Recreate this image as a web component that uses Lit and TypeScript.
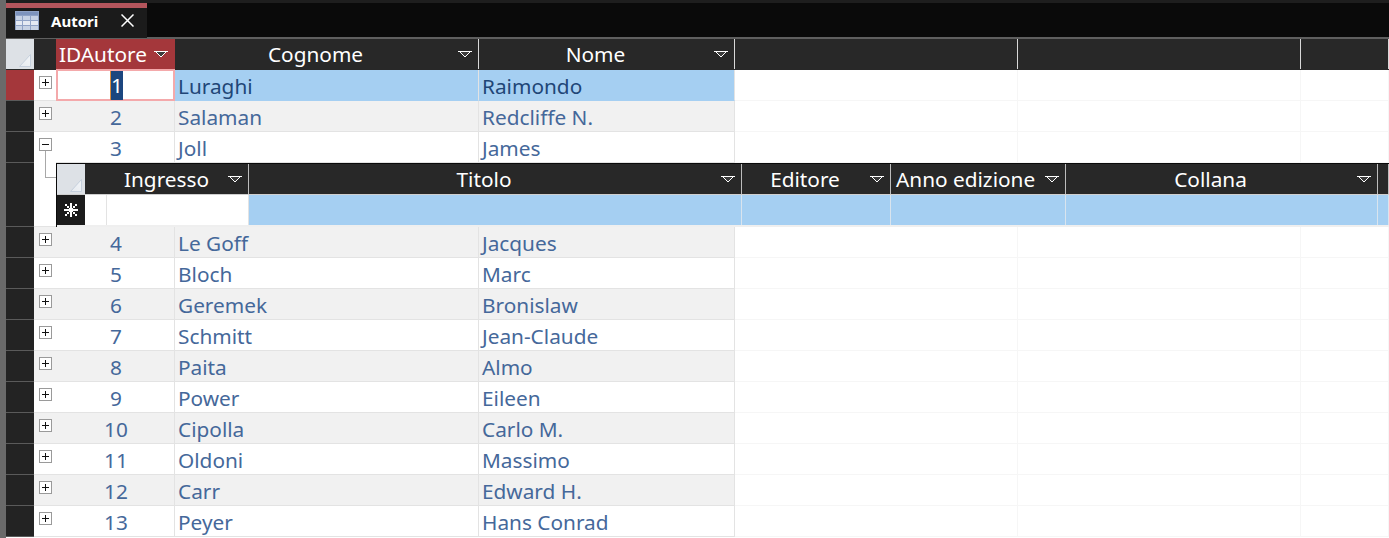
import { LitElement, html, css, svg } from "lit";
import { customElement } from "lit/decorators.js";

const filterIcon = html`<svg class="filter" width="14" height="8" viewBox="0 0 14 8" shape-rendering="crispEdges">
  <path d="M3 1h8v1h-1v1h-1v1h-1v1h-2v-1h-1v-1h-1v-1h-1z" fill="#3c3c3c"/>
  <path d="M0 0h14v1h-14z M2 1h1v1h-1z M11 1h1v1h-1z M3 2h1v1h-1z M10 2h1v1h-1z M4 3h1v1h-1z M9 3h1v1h-1z M5 4h1v1h-1z M8 4h1v1h-1z M6 5h2v1h-2z" fill="#fff"/>
</svg>`;

const cornerIcon = html`<svg class="corner-tri" width="28" height="30" viewBox="0 0 28 30">
  <defs><linearGradient id="cg" x1="0" y1="1" x2="1" y2="0"><stop offset="0" stop-color="#e6eaef"/><stop offset="1" stop-color="#f2f5f8"/></linearGradient></defs>
  <path d="M13.5 27.5 L24.5 15.5 V27.5 Z" fill="url(#cg)" stroke="#c6d0dd" stroke-width="1"/>
</svg>`;

const box = (open: boolean) => html`<svg class="box" width="13" height="13" viewBox="0 0 13 13" shape-rendering="crispEdges">
  <rect x="0.5" y="0.5" width="12" height="12" fill="#fff" stroke="#9a9a9a"/>
  <path d="${open ? "M3 6h7v1h-7z" : "M3 6h7v1h-7z M6 3h1v7h-1z"}" fill="#111"/>
</svg>`;

const rows: [number, string, string][] = [
  [1, "Luraghi", "Raimondo"],
  [2, "Salaman", "Redcliffe N."],
  [3, "Joll", "James"],
  [4, "Le Goff", "Jacques"],
  [5, "Bloch", "Marc"],
  [6, "Geremek", "Bronislaw"],
  [7, "Schmitt", "Jean-Claude"],
  [8, "Paita", "Almo"],
  [9, "Power", "Eileen"],
  [10, "Cipolla", "Carlo M."],
  [11, "Oldoni", "Massimo"],
  [12, "Carr", "Edward H."],
  [13, "Peyer", "Hans Conrad"],
];

@customElement("app-root")
export class AppRoot extends LitElement {
  static styles = css`
    :host {
      display: block;
      width: 1389px;
      height: 538px;
      overflow: hidden;
      background: #fff;
      font-family: "Noto Sans", "Open Sans", sans-serif;
      font-size: 20.8px;
    }
    .frame { display: flex; height: 538px; }
    .strip { width: 6px; flex: none; background: #6a6a6a; }
    .main { flex: 1; min-width: 0; display: flex; flex-direction: column; }
    .topbar {
      flex: none; height: 34px; background: #0a0a0a; border-top: 3px solid #1e1e1e;
      border-bottom: 2px solid #5f5f5f; display: flex;
    }
    .tab {
      width: 141px; height: 35px; box-sizing: border-box; background: #1b1b1b;
      border-top: 5px solid #b4555c; display: flex; align-items: center;
      padding: 0 0 5px 9px; color: #fff; flex: none; position: relative; z-index: 1;
    }
    .tab-icon { display: block; }
    .tab-title { font-size: 15px; font-weight: 700; margin-left: 12px; width: 54px; }
    .tab-x { margin-left: 16px; }
    .grid {
      display: grid;
      grid-template-columns: 28px 22px 119px 304px 256px 283px 283px 1fr;
    }
    .hrow { height: 31px; background: #282828; }
    .hcell {
      background: #282828; color: #fff; display: flex; align-items: center; justify-content: center;
      border-right: 1px solid #d8d8d8; position: relative; min-width: 0; white-space: nowrap;
      box-sizing: border-box; height: 30px; line-height: 30px;
    }
    .hcell.plain { border-right: none; }
    .hcell.filtered { padding-right: 22px; }
    .hcell.active { background: #a4373b; justify-content: flex-start; padding: 0 0 0 3px; border-right: 1px solid #a4373b; }
    .hcell.left { justify-content: flex-start; padding: 0 0 0 5px; }
    .hcell .filter { position: absolute; right: 6px; top: 12px; }
    .corner { background: #dde1e6; height: 30px; overflow: hidden; }
    .corner-tri { display: block; }
    .row { height: 31px; }
    .cell {
      border-bottom: 1px solid #e3e3e3; border-right: 1px solid #e3e3e3; color: #45689a;
      line-height: 32px; white-space: nowrap; min-width: 0; box-sizing: border-box; height: 31px;
    }
    .stripe .cell.data { background: #f1f1f1; }
    .cell.txt { padding-left: 3px; }
    .cell.num { text-align: center; padding-left: 2px; }
    .cell.blank { border-color: #f6f6f6; background: #fff; }
    .sel { background: #232323; border-bottom: 1px solid #5a5a5a; height: 31px; box-sizing: border-box; }
    .sel.cur { background: #a4373b; }
    .exp { padding: 6px 0 0 5px; border-bottom: 1px solid #e3e3e3; height: 31px; box-sizing: border-box; position: relative; }
    .exp.open { border-bottom: none; }
    .stripe .exp { background: #f1f1f1; }
    .box { display: block; position: relative; z-index: 1; }
    .cell.picked { background: #a5cff2; color: #1f4677; border-bottom-color: #a5cff2; }
    .cell.current { box-shadow: inset 0 0 0 2px #f4a9ab; border: none; margin-top: -1px; height: 32px; line-height: 34px; }
    .hl { background: #1c467f; color: #fff; display: inline-block; line-height: 29px; height: 29px; width: 12px; text-align: center; border-left: 1px solid #d98a3a; vertical-align: top; margin-top: 2px; }

    .sub-wrap { display: grid; grid-template-columns: 28px 22px 1fr; height: 64px; }
    .sub-sel { background: #232323; border-bottom: 1px solid #5a5a5a; }
    .tree { position: relative; background: #fff; border-bottom: 1px solid #e3e3e3; }
    .tree::before {
      content: ""; position: absolute; left: 11px; top: -13px; width: 10px; height: 27px;
      border-left: 1px solid #a8a8a8; border-bottom: 1px solid #a8a8a8;
    }
    .sub { border-top: 1px solid #0a0a0a; border-left: 1px solid #0a0a0a; min-width: 0; box-sizing: border-box; }
    .sgrid { display: grid; grid-template-columns: 28px 22px 142px 493px 149px 175px 312px 1fr; }
    .shrow { height: 30px; border-bottom: 1px solid #cfcfcf; }
    .shrow .hcell { height: 30px; line-height: 32px; }
    .shrow .hcell:not(.plain) { border-right-color: #bdbdbd; }
    .srow { height: 30px; border-bottom: 2px solid #efefef; }
    .scell { background: #a5cff2; border-right: 1px solid #d9e4ee; box-sizing: border-box; }
    .scell.white { background: #fff; border-right-color: #e3e3e3; }
    .star { background: #1c1c1c; display: flex; align-items: center; justify-content: center; }
  `;

  private header() {
    const cols = [
      ["Cognome", true],
      ["Nome", true],
      ["", false],
      ["", false],
      ["", false],
    ] as [string, boolean][];
    return html`<div class="grid hrow">
      <div class="corner">${cornerIcon}</div>
      <div class="hcell plain"></div>
      <div class="hcell active">IDAutore${filterIcon}</div>
      ${cols.map(([t, f]) => html`<div class="hcell ${f ? "filtered" : ""}">${t}${f ? filterIcon : ""}</div>`)}
    </div>`;
  }

  private row(r: [number, string, string]) {
    const first = r[0] === 1;
    const open = r[0] === 3;
    return html`<div class="grid row ${r[0] % 2 === 0 ? "stripe" : ""}">
      <div class="sel ${first ? "cur" : ""}"></div>
      <div class="exp ${open ? "open" : ""}">${box(open)}</div>
      <div class="cell data num ${first ? "current" : ""}">${first ? html`<span class="hl">1</span>` : r[0]}</div>
      <div class="cell data txt ${first ? "picked" : ""}">${r[1]}</div>
      <div class="cell data txt ${first ? "picked" : ""}">${r[2]}</div>
      <div class="cell blank"></div>
      <div class="cell blank"></div>
      <div class="cell blank"></div>
    </div>`;
  }

  private sub() {
    const cols: [string, string][] = [
      ["Ingresso", "filtered"], ["Titolo", "filtered"], ["Editore", "filtered"], ["Anno edizione", "left"], ["Collana", "filtered"],
    ];
    return html`<div class="sub-wrap">
      <div class="sub-sel"></div>
      <div class="tree"></div>
      <div class="sub">
        <div class="sgrid shrow">
          <div class="corner">${cornerIcon}</div>
          <div class="hcell plain"></div>
          ${cols.map(([t, a]) => html`<div class="hcell ${a}">${t}${filterIcon}</div>`)}
          <div class="hcell"></div>
        </div>
        <div class="sgrid srow">
          <div class="star">
            <svg width="14" height="14" viewBox="0 0 14 14" shape-rendering="crispEdges">
              <path d="M6 0h2v14h-2z M0 6h14v2h-14z M5 5h4v4h-4z M1 1h2v2h-2z M3 3h2v2h-2z M11 1h2v2h-2z M9 3h2v2h-2z M1 11h2v2h-2z M3 9h2v2h-2z M11 11h2v2h-2z M9 9h2v2h-2z" fill="#fff"/>
            </svg>
          </div>
          <div class="scell white"></div>
          <div class="scell white"></div>
          <div class="scell"></div>
          <div class="scell"></div>
          <div class="scell"></div>
          <div class="scell"></div>
          <div class="scell"></div>
        </div>
      </div>
    </div>`;
  }

  render() {
    const xs: [number, number][] = [[1, 6], [8, 7], [16, 7]];
    return html`<div class="frame">
      <div class="strip"></div>
      <div class="main">
        <div class="topbar">
          <div class="tab">
            <svg class="tab-icon" width="24" height="19" viewBox="0 0 24 19" shape-rendering="crispEdges">
              <rect width="24" height="19" fill="#8fa2c6"/>
              <rect x="1" y="1" width="22" height="3" fill="#7d93bd"/>
              ${xs.map(([x, w]) => [0, 1, 2].map((r) => svg`<rect x="${x}" y="${5 + r * 5}" width="${w}" height="4" fill="${r === 1 ? "#e4e9f3" : "#c6d1e4"}"/>`))}
            </svg>
            <span class="tab-title">Autori</span>
            <svg class="tab-x" width="13" height="13" viewBox="0 0 13 13"><path d="M0.5 0.5L12.5 12.5M12.5 0.5L0.5 12.5" stroke="#fff" stroke-width="1.5"/></svg>
          </div>
        </div>
        ${this.header()}
        ${rows.slice(0, 3).map((r) => this.row(r))}
        ${this.sub()}
        ${rows.slice(3).map((r) => this.row(r))}
      </div>
    </div>`;
  }
}
